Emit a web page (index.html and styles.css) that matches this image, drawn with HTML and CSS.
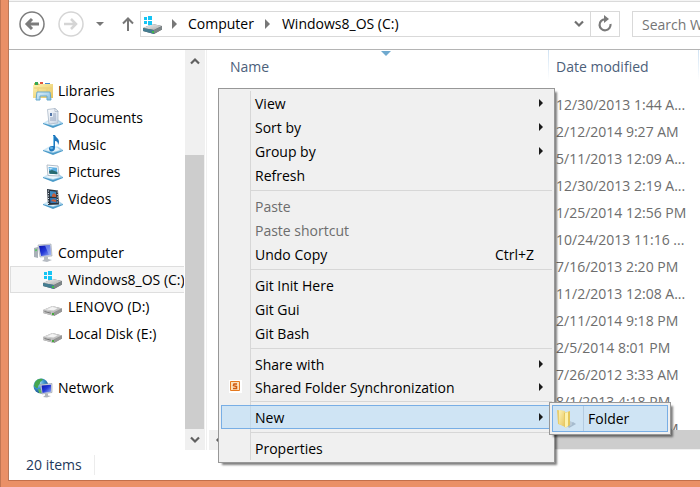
FILE: index.html
```html
<!DOCTYPE html>
<html lang="en">
<head>
<meta charset="utf-8">
<title>Windows8_OS (C:)</title>
<link rel="stylesheet" href="styles.css">
</head>
<body>
<svg class="defs" aria-hidden="true">
  <defs>
    <linearGradient id="paper" x1="0" y1="0" x2="1" y2="1"><stop offset="0" stop-color="#ffffff"/><stop offset="1" stop-color="#c6d3e4"/></linearGradient>
    <linearGradient id="ice" x1="0" y1="0" x2="1" y2="1"><stop offset="0" stop-color="#e6f5fd"/><stop offset="1" stop-color="#7db9de"/></linearGradient>
    <linearGradient id="gold" x1="0" y1="0" x2="1" y2="1"><stop offset="0" stop-color="#fdf3b4"/><stop offset="1" stop-color="#e6c35c"/></linearGradient>
    <linearGradient id="screen" x1="0" y1="0" x2="1" y2="1"><stop offset="0" stop-color="#0a12a8"/><stop offset="0.5" stop-color="#2338d8"/><stop offset="1" stop-color="#9db4f4"/></linearGradient>
    <linearGradient id="metal" x1="0" y1="0" x2="1" y2="1"><stop offset="0" stop-color="#f4f4f4"/><stop offset="1" stop-color="#a9a9a9"/></linearGradient>
    <radialGradient id="globe" cx="0.35" cy="0.3" r="0.7"><stop offset="0" stop-color="#bfe6f8"/><stop offset="0.5" stop-color="#3d96cf"/><stop offset="1" stop-color="#17508f"/></radialGradient>
    <symbol id="tray" viewBox="0 0 20 20">
      <path d="M0 15l6-3.500h9l5 3.500-10 4z" fill="url(#ice)"/>
      <path d="M0 15l10 3 10-3v1l-10 4-10-4z" fill="#4b9bc9"/>
      <path d="M3 15l5-2.500h6l3 2.500-7 2z" fill="#eaf7fd"/>
    </symbol>
    <symbol id="drive" viewBox="0 0 20 20">
      <path d="M0 13L9.500 9l9.500 2.500v3L11 19 0 16z" fill="#888"/>
      <path d="M0 13L9.500 9l9.500 2.500-8 4z" fill="url(#metal)"/>
      <path d="M0 13l11 2.500V19L0 16z" fill="#c2c2c2"/>
      <path d="M11 15.500l8-4v3L11 19z" fill="#979797"/>
      <path d="M4 12.500l5.500-2.500 5 1.500-4 2z" fill="#fff" opacity=".75"/>
      <path d="M1.500 14.500l6.500 1.700" stroke="#777" fill="none"/>
      <path d="M9 16h2v2H9z" fill="#45a83c"/>
    </symbol>
    <symbol id="osdrive" viewBox="0 0 20 20">
      <path d="M0 13l9.500-4 9.500 2v3.500L11 19 0 16z" fill="#596165"/>
      <path d="M0 13l9.500-4 9.500 2-8 4z" fill="url(#metal)"/>
      <path d="M0 13l11 2v4L0 16z" fill="#457d91"/>
      <path d="M11 15l8-4v3.500L11 19z" fill="#7d8587"/>
      <path d="M9 16h2v2H9z" fill="#40b94a"/>
      <path d="M1 2h3v3H1zM5 1h4v4H5zM1 6h3v3H1zM5 6h4v4H5z" fill="#14c4f4"/>
    </symbol>
    <symbol id="libraries" viewBox="0 0 20 20">
      <path d="M1 2h4l1 1h13v14H1z" fill="#d9b758"/>
      <path d="M2 1h3v3H2z" fill="#35a853"/><path d="M7 1h3v3H7z" fill="#e1563f"/><path d="M12 2h5v2h-5z" fill="#428bd0"/>
      <path d="M0 4h6l1-1h13v14H0z" fill="url(#gold)"/>
      <path d="M1 7h18M5 8v8M14 8v8" stroke="#eace76" fill="none"/>
      <path d="M4 11h13l1 8h-4v-4H7v4H3z" fill="url(#ice)" stroke="#68a9cc"/>
    </symbol>
    <symbol id="documents" viewBox="0 0 20 20">
      <use href="#tray"/>
      <path d="M4.500 1.500L12 .500l3 2.500v12l-9 1z" fill="url(#paper)" stroke="#a9b7c8" stroke-width=".8"/>
      <path d="M12 .500V3.500h3z" fill="#fff" stroke="#93a4b8" stroke-width=".6"/>
      <path d="M7 5h2v3H7z" fill="#5577a8"/><path d="M10 6h3M10 8h3M7 10h6M7 12h6" stroke="#8496b2" stroke-width=".8"/>
    </symbol>
    <symbol id="music" viewBox="0 0 20 20">
      <use href="#tray"/>
      <path d="M10 0h2c1 3 4 3 4 7 0 1-.500 2-1 3 0-3-1-4-3-4v7c0 2-1.500 3.500-3.500 3.500S6 15 6 13.500 7.500 10.500 10 11z" fill="#2178bd"/>
      <path d="M10.500 1v10" stroke="#72bfea"/><ellipse cx="8.500" cy="13" rx="1.500" ry="1.200" fill="#64b4e4"/>
    </symbol>
    <symbol id="pictures" viewBox="0 0 20 20">
      <use href="#tray"/>
      <path d="M4 3l11 1 1 10-11-.500z" fill="#fff" stroke="#b2bdc9"/>
      <path d="M5.500 5l8.500.700.500 6.500-8-.500z" fill="#5caee2"/>
      <path d="M6 9l3-1 5.300 2 .200 2.200-8-.500z" fill="#276b70"/><path d="M6 6l4 .500-3 1z" fill="#e3f4fb"/>
    </symbol>
    <symbol id="videos" viewBox="0 0 20 20">
      <use href="#tray"/>
      <path d="M4 0l11 1.500 1 14L5 16z" fill="#2a3440"/>
      <path d="M7 2l6 .800v5L7 7.500z" fill="#3e8cc6"/><path d="M7 9h6.500v5H7.500z" fill="#3376b4"/>
      <path d="M9 6l2-2 2 2v2l-4-.300zM8 12l2-2 3 1v2z" fill="#c75d38"/>
      <path d="M5.500 1.500v14M14.300 2.500v12" stroke="#dae4ed" stroke-width="1" stroke-dasharray="1 1.500"/>
    </symbol>
    <symbol id="computer" viewBox="0 0 20 20">
      <path d="M1 5l4-1v11l-4-1z" fill="#a9b1b8"/><path d="M2 6.500l2-.500v2l-2 .300z" fill="#5fc36a"/>
      <path d="M5 2l13-1 1 12-12 1z" fill="#d6dbe1" stroke="#9aa2ae" stroke-width=".6"/>
      <path d="M6 3l11-1 1 10-10 1z" fill="url(#screen)"/>
      <path d="M12 2.500l5-.500 1 10-2 .200z" fill="#a8bdf8" opacity=".55"/>
      <path d="M11 14h4v2l4 1-5 2-5-1 2-1.500z" fill="#b6bbc2"/>
    </symbol>
    <symbol id="network" viewBox="0 0 20 20">
      <circle cx="8" cy="8" r="7.500" fill="url(#globe)"/>
      <path d="M2 4c2-3 5-4 8-3 0 2-3 2-3 4s-2 2-2 4-2 1-4-1z" fill="#45a750"/><path d="M5 11l4 1v3H6z" fill="#62b958"/>
      <path d="M7 6.500l12-1v9l-10 1.500z" fill="#d6dbe1" stroke="#8d98a8" stroke-width=".6"/>
      <path d="M8.500 7.500l9.500-.800v7l-8.500 1.200z" fill="url(#screen)"/>
      <path d="M12 15.500h3v2l3 .500-4 1.500-4-.500 2-1.500z" fill="#b0b5bd"/>
    </symbol>
    <symbol id="folder" viewBox="0 0 20 20">
      <path d="M11 16l6-3 3 2-7 4z" fill="#7d91a8" opacity=".5"/>
      <path d="M1 1l6 1 1 15-6-2z" fill="#e9cd6c"/>
      <path d="M3 1l6 1v16l-6-3z" fill="url(#gold)"/>
      <path d="M8 4l6-2v14l-5 3z" fill="#e4c65c"/>
      <path d="M9 4l3-1v14l-3 2z" fill="#fdf2ae"/>
      <path d="M14 12l2 1v3l-2 1z" fill="#b9cad8"/>
    </symbol>
  </defs>
</svg>
<div class="frame">
<div class="window">
  <header class="toolbar">
    <button class="nav-btn" aria-label="Back"><svg width="26" height="26" viewBox="0 0 26 26" fill="none" stroke="#7c7c7c"><circle cx="13" cy="13" r="12" stroke-width="1.500"/><path d="M20 13H8.500M13 8l-5 5 5 5" stroke-width="3"/></svg></button>
    <button class="nav-btn forward" aria-label="Forward"><svg width="26" height="26" viewBox="0 0 26 26" fill="none" stroke="#d5d5d5"><circle cx="13" cy="13" r="12" stroke-width="1.500"/><path d="M6 13h11.500M13 8l5 5-5 5" stroke-width="2.500"/></svg></button>
    <button class="recent" aria-label="Recent locations"><svg width="8" height="4" viewBox="0 0 8 4"><path d="M0 0h8L4 4z" fill="#777"/></svg></button>
    <button class="up" aria-label="Up"><svg width="12" height="14" viewBox="0 0 12 14" fill="none" stroke="#777" stroke-width="2"><path d="M6 14V2M1 6.500l5-5 5 5"/></svg></button>
    <div class="address">
      <svg class="icon"><use href="#osdrive"/></svg>
      <svg class="crumb" width="5" height="10" viewBox="0 0 5 10"><path d="M0 0l5 5-5 5z" fill="#777"/></svg>
      <a href="#computer-root">Computer</a>
      <svg class="crumb" width="5" height="10" viewBox="0 0 5 10"><path d="M0 0l5 5-5 5z" fill="#777"/></svg>
      <a href="#drive-c">Windows8_OS (C:)</a>
      <button class="history" aria-label="Previous locations"><svg width="10" height="8" viewBox="0 0 10 8" fill="none" stroke="#707070" stroke-width="2.200"><path d="M1 1.500l4 4 4-4"/></svg></button>
      <button class="refresh" aria-label="Refresh"><svg width="16" height="18" viewBox="0 0 16 18"><path d="M8 4.300A5.500 5.500 0 1 0 13.500 9" fill="none" stroke="#7a7a7a" stroke-width="2.200"/><path d="M7 0l5 4-5 4z" fill="#7a7a7a"/></svg></button>
    </div>
    <input class="search" type="text" aria-label="Search" placeholder="Search Windows8_OS (C:)">
  </header>
  <div class="body">
    <nav class="tree">
      <a href="#libraries-root"><svg class="icon"><use href="#libraries"/></svg>Libraries</a>
      <a class="child" href="#docs"><svg class="icon"><use href="#documents"/></svg>Documents</a>
      <a class="child" href="#music-lib"><svg class="icon"><use href="#music"/></svg>Music</a>
      <a class="child" href="#pictures-lib"><svg class="icon"><use href="#pictures"/></svg>Pictures</a>
      <a class="child" href="#videos-lib"><svg class="icon"><use href="#videos"/></svg>Videos</a>
      <a class="group" href="#computer-root"><svg class="icon"><use href="#computer"/></svg>Computer</a>
      <a class="child selected" href="#drive-c"><svg class="icon"><use href="#osdrive"/></svg>Windows8_OS (C:)</a>
      <a class="child" href="#drive-d"><svg class="icon"><use href="#drive"/></svg>LENOVO (D:)</a>
      <a class="child" href="#drive-e"><svg class="icon"><use href="#drive"/></svg>Local Disk (E:)</a>
      <a class="group" href="#network-root"><svg class="icon"><use href="#network"/></svg>Network</a>
    </nav>
    <div class="vscroll">
      <button aria-label="Scroll up"><svg width="10" height="8" viewBox="0 0 10 8" fill="none" stroke="#606060" stroke-width="2.200"><path d="M1 6.500l4-4 4 4"/></svg></button>
      <div class="thumb"></div>
      <button aria-label="Scroll down"><svg width="10" height="8" viewBox="0 0 10 8" fill="none" stroke="#606060" stroke-width="2.200"><path d="M1 1.500l4 4 4-4"/></svg></button>
    </div>
    <main class="content">
      <div class="files">
        <table>
          <thead><tr><th class="name">Name<svg class="sort" width="10" height="5" viewBox="0 0 10 5"><path d="M0 0h10L5 5z" fill="#6fa9cf"/></svg></th><th class="date">Date modified</th><th></th></tr></thead>
          <tbody>
            <tr><td></td><td>12/30/2013 1:44 A...</td><td></td></tr>
            <tr><td></td><td>2/12/2014 9:27 AM</td><td></td></tr>
            <tr><td></td><td>5/11/2013 12:09 A...</td><td></td></tr>
            <tr><td></td><td>12/30/2013 2:19 A...</td><td></td></tr>
            <tr><td></td><td>1/25/2014 12:56 PM</td><td></td></tr>
            <tr><td></td><td>10/24/2013 11:16 ...</td><td></td></tr>
            <tr><td></td><td>7/16/2013 2:20 PM</td><td></td></tr>
            <tr><td></td><td>11/2/2013 12:08 A...</td><td></td></tr>
            <tr><td></td><td>2/11/2014 9:18 PM</td><td></td></tr>
            <tr><td></td><td>2/5/2014 8:01 PM</td><td></td></tr>
            <tr><td></td><td>7/26/2012 3:33 AM</td><td></td></tr>
            <tr><td></td><td>8/1/2013 4:18 PM</td><td></td></tr>
            <tr><td></td><td>7/26/2012 3:33 AM</td><td></td></tr>
          </tbody>
        </table>
      </div>
      <div class="hscroll">
        <button aria-label="Scroll left"><svg width="8" height="10" viewBox="0 0 8 10" fill="none" stroke="#606060" stroke-width="2.200"><path d="M6.500 1l-4 4 4 4"/></svg></button>
        <div class="thumb"></div>
      </div>
    </main>
  </div>
  <footer class="status"><span>20 items</span></footer>
</div>
</div>

<div class="menu" role="menu">
  <button role="menuitem" class="sub">View</button>
  <button role="menuitem" class="sub">Sort by</button>
  <button role="menuitem" class="sub">Group by</button>
  <button role="menuitem">Refresh</button>
  <hr>
  <button role="menuitem" disabled>Paste</button>
  <button role="menuitem" disabled>Paste shortcut</button>
  <button role="menuitem">Undo Copy<span class="key">Ctrl+Z</span></button>
  <hr>
  <button role="menuitem">Git Init Here</button>
  <button role="menuitem">Git Gui</button>
  <button role="menuitem">Git Bash</button>
  <hr>
  <button role="menuitem" class="sub">Share with</button>
  <button role="menuitem" class="sub sync"><svg class="badge" width="13" height="13" viewBox="0 0 13 13"><path d="M0 0h13v13H0z" fill="#fff"/><path d="M1.500 1.500h9v9h-9z" fill="#fbe0bb" stroke="#e5791f"/><path d="M8 4H5L4.500 5.500 7.500 6.500v2H4" fill="none" stroke="#cf5a12" stroke-width="1.500"/></svg>Shared Folder Synchronization</button>
  <hr>
  <button role="menuitem" class="sub active">New</button>
  <hr>
  <button role="menuitem">Properties</button>
</div>
<div class="submenu" role="menu">
  <button role="menuitem"><svg class="icon"><use href="#folder"/></svg><span>Folder</span></button>
</div>
</body>
</html>
```
FILE: styles.css
```css
* { box-sizing: border-box; }
body {
  margin: 0;
  overflow: hidden;
  background: #fff;
  font: 14px/20px "Open Sans", "Noto Sans", sans-serif;
  color: #000;
}
a { color: inherit; text-decoration: none; }
button { font: inherit; color: inherit; background: none; border: 0; padding: 0; margin: 0; }
svg { display: block; flex: none; }
.defs { position: absolute; width: 0; height: 0; }
.icon { width: 20px; height: 20px; }

.frame {
  height: 100vh;
  padding: 0 0 6px 7px;
  border-left: 1px solid #c27653;
  background: #ea9067;
}
.window {
  display: flex;
  flex-direction: column;
  height: 100%;
  border-left: 1px solid #b8785a;
  border-bottom: 1px solid #c2704c;
  background: #fff;
}

/* Address bar */
.toolbar {
  display: flex;
  align-items: center;
  flex: none;
  height: 50px;
  padding: 0 0 2px 10px;
  border-top: 1px solid #f5f5f5;
  border-bottom: 1px solid #b4b4b4;
  box-shadow: inset 0 1px #dadada;
}
.nav-btn { margin-right: 13px; }
.recent { margin-right: 18px; }
.up { margin-right: 9px; }
.forward { margin-right: 12px; }
.address {
  display: flex;
  align-items: center;
  flex: 1;
  height: 26px;
  margin-left: -3px;
  border: 1px solid #d9d9d9;
  padding-left: 2px;
}
.address .icon { margin-top: 1px; }
.crumb { margin: 0 11px 0 9px; }
.address a + .crumb { margin: 0 12px 0 11px; }
.history { margin-left: auto; width: 22px; display: flex; justify-content: center; }
.refresh {
  width: 29px;
  height: 24px;
  display: flex;
  align-items: center;
  justify-content: center;
  border-left: 1px solid #d9d9d9;
}
.search {
  width: 68px;
  height: 26px;
  margin-left: 12px;
  padding: 0 0 0 9px;
  border: 1px solid #d9d9d9;
  border-right: 0;
  border-radius: 0;
  font: inherit;
  background: #fff;
}
.search::placeholder { color: #757575; opacity: 1; }

/* Folder tree */
.body { display: flex; flex: 1; min-height: 0; }
.tree {
  flex: 0 0 175px;
  padding: 27px 0 0 1px;
  overflow: hidden;
}
.tree a {
  display: flex;
  align-items: center;
  gap: 5px;
  height: 27px;
  padding-left: 22px;
  border: 1px solid transparent;
  border-right: 0;
  white-space: nowrap;
}
.tree .child { padding-left: 32px; }
.tree .group { margin-top: 27px; }
.tree .selected { background: #f7f7f7; border-color: #dedede; overflow: hidden; }

.vscroll {
  flex: 0 0 20px;
  margin-left: 1px;
  display: flex;
  flex-direction: column;
  background: #f0f0f0;
}
.vscroll button { height: 21px; display: flex; align-items: center; justify-content: center; }
.vscroll .thumb { flex: 1; margin: 84px 1px 0 0; background: #cdcdcd; }

/* File list */
.content {
  flex: 1;
  min-width: 0;
  display: flex;
  flex-direction: column;
  margin-left: 1px;
  border-left: 1px solid #f0f0f0;
}
.files { flex: 1; min-height: 0; overflow: hidden; }
table { width: 100%; table-layout: fixed; border-collapse: collapse; color: #6d6d6d; }
th { height: 41px; padding: 0 0 7px 8px; text-align: left; font-weight: 400; color: #4c607a; }
th + th {
  background: linear-gradient(#cfe2f3, #fff) 0 0 / 1px 30px no-repeat;
}
th.name { position: relative; padding-left: 23px; }
.sort { position: absolute; top: 1px; left: 174px; }
th.date { width: 150px; }
th:last-child { width: 2px; padding: 0; }
td { height: 27px; padding: 0 0 0 8px; white-space: nowrap; }
td:last-child { padding: 0; }
.hscroll { display: flex; height: 20px; margin-left: 2px; background: #f0f0f0; }
.hscroll button { width: 20px; display: flex; align-items: center; justify-content: center; }
.hscroll .thumb { flex: 1; margin-bottom: 1px; background: #cdcdcd; }

.status { flex: none; height: 30px; padding: 5px 0 0 17px; color: #1e395b; }
.status span { display: inline-block; padding-right: 12px; border-right: 1px solid #ececec; line-height: 20px; }

/* Context menus float over the file list */
.menu, .submenu {
  position: absolute;
  border: 1px solid #979797;
  background: #f0f0f0;
  box-shadow: 3px 3px 2px -1px rgba(0, 0, 0, .5);
  padding: 2px;
}
.menu { left: 218px; top: 88px; width: 337px; }
.menu::before {
  content: "";
  position: absolute;
  left: 31px;
  top: 2px;
  bottom: 2px;
  width: 1px;
  background: #d7d7d7;
}
.menu button {
  position: relative;
  display: flex;
  align-items: center;
  width: 100%;
  height: 24px;
  padding: 0 18px 0 34px;
  line-height: 22px;
  text-align: left;
}
.menu button:not(.sync) { padding-top: 2px; }
.menu button:disabled { color: #6d6d6d; }
.menu hr { height: 1px; margin: 3px 0 3px 30px; border: 0; background: #d7d7d7; }
.menu .sub::after {
  content: "";
  margin: 0 -9px 2px auto;
  border: 4px solid transparent;
  border-left-color: #1a1a1a;
  border-right: 0;
}
.menu .sync { height: 22px; padding-top: 1px; }
.badge { position: absolute; left: 8px; top: 4px; }
.key { margin-left: auto; }
.menu .active, .submenu button {
  background: rgba(174, 215, 247, .5);
  box-shadow: inset 0 0 0 1px #78aee5;
}

.submenu { left: 549px; top: 402px; width: 122px; }
.submenu button { display: flex; align-items: center; width: 100%; height: 27px; padding-left: 4px; }
.submenu span { margin-left: 7px; padding-left: 4px; border-left: 1px solid #b4cbe0; line-height: 25px; }
```
